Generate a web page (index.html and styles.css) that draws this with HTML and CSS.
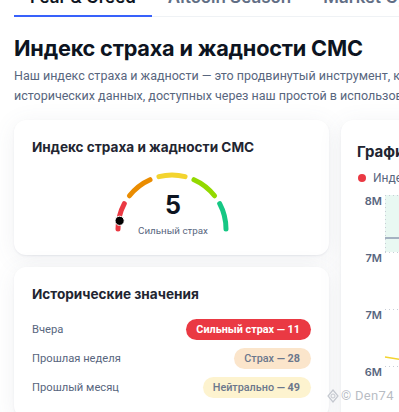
FILE: index.html
```html
<!DOCTYPE html>
<html lang="ru">
<head>
<meta charset="utf-8">
<title>Индекс страха и жадности CMC</title>
<link rel="stylesheet" href="styles.css">
</head>
<body>
<div class="page">
  <nav class="tabs">
    <a class="tab active">Fear &amp; Greed</a>
    <a class="tab">Altcoin Season</a>
    <a class="tab">Market Cycle Indicators</a>
  </nav>

  <h1 class="title">Индекс страха и жадности CMC</h1>
  <p class="intro"><span class="line">Наш индекс страха и жадности — это продвинутый инструмент, который помогает оценить настроения рынка на основе</span><br><span class="line">исторических данных, доступных через наш простой в использовании API.</span></p>

  <div class="grid">
    <div class="col">
      <section class="card gauge-card">
        <h2 class="card-title">Индекс страха и жадности CMC</h2>
        <svg class="gauge" width="120" height="70" viewBox="0 0 120 70">
          <g fill="none" stroke-width="5" stroke-linecap="round">
            <path d="M6 60 A54 54 0 0 1 12.32 34.65" stroke="#ea3943"/>
            <path d="M17.45 26.75 A54 54 0 0 1 38.04 10.67" stroke="#ea8c00"/>
            <path d="M46.94 7.6 A54 54 0 0 1 73.06 7.6" stroke="#f3d42f"/>
            <path d="M81.96 10.67 A54 54 0 0 1 102.55 26.75" stroke="#93d900"/>
            <path d="M107.68 34.65 A54 54 0 0 1 114 60" stroke="#16c784"/>
          </g>
          <circle cx="7.6" cy="51.8" r="4.6" fill="#000" stroke="#fff" stroke-width="1"/>
          <text class="g-value" x="61" y="45" text-anchor="middle">5</text>
          <text class="g-label" x="61" y="64.5" text-anchor="middle">Сильный страх</text>
        </svg>
      </section>

      <section class="card hist-card">
        <h2 class="card-title">Исторические значения</h2>
        <ul class="hist">
          <li class="row"><span class="row-label">Вчера</span><span class="pill pill-red">Сильный страх — 11</span></li>
          <li class="row"><span class="row-label">Прошлая неделя</span><span class="pill pill-orange">Страх <b>— 28</b></span></li>
          <li class="row"><span class="row-label">Прошлый месяц</span><span class="pill pill-yellow">Нейтрально <b>— 49</b></span></li>
        </ul>
      </section>
    </div>

    <section class="card chart-card">
      <h2 class="card-title chart-title">График индекса страха и жадности CMC</h2>
      <div class="legend"><span class="legend-dot"></span>Индекс страха и жадности CMC</div>
      <svg class="chart" width="600" height="200" viewBox="0 0 600 200">
        <rect x="28" y="6" width="572" height="57" fill="#e9f8f2"/>
        <g stroke="#c7cdd6" stroke-width="1" stroke-dasharray="1 3">
          <line x1="28" y1="6.5" x2="600" y2="6.5"/>
          <line x1="28" y1="63.5" x2="600" y2="63.5"/>
          <line x1="28" y1="120.5" x2="600" y2="120.5"/>
          <line x1="28" y1="177.5" x2="600" y2="177.5"/>
          <line x1="28.5" y1="6" x2="28.5" y2="63"/>
        </g>
        <line x1="28" y1="49" x2="600" y2="49" stroke="#8d9bb0" stroke-width="1.5"/>
        <polyline points="28,168 60,173 120,176" fill="none" stroke="#f3d42f" stroke-width="1.5"/>
        <g class="axis">
          <text x="25" y="16" text-anchor="end">8M</text>
          <text x="25" y="73" text-anchor="end">7M</text>
          <text x="25" y="130" text-anchor="end">7M</text>
          <text x="25" y="187" text-anchor="end">6M</text>
        </g>
      </svg>
    </section>
  </div>
</div>

<div class="watermark">
  <svg width="12" height="14" viewBox="0 0 12 14"><path d="M6 1 L11 7 L6 13 L1 7 Z" fill="none" stroke="#c4c8cf" stroke-width="1.2"/><circle cx="6" cy="7" r="2" fill="none" stroke="#c4c8cf" stroke-width="1"/></svg>
  <span>© Den74</span>
</div>
</body>
</html>
```

FILE: styles.css
```css
* { box-sizing: border-box; }

html, body {
  margin: 0;
  padding: 0;
  background: #ffffff;
  overflow: hidden;
}

body {
  font-family: Inter, "Noto Sans", "Liberation Sans", sans-serif;
  color: #0d1421;
  width: 399px;
  height: 412px;
  position: relative;
}

.page {
  width: 1000px;
  padding: 0 14px;
}

.tabs {
  display: flex;
  margin-top: -15px;
  border-bottom: 1px solid #eff2f5;
}

.tab {
  font-size: 17px;
  line-height: 24px;
  font-weight: 600;
  padding: 0 16px 6px;
  color: #616e85;
  border-bottom: 2px solid transparent;
  margin-bottom: -1px;
  white-space: nowrap;
}

.tab.active {
  color: #0d1421;
  border-bottom-color: #3861fb;
}

.title {
  margin: 17px 0 0;
  font-size: 21.7px;
  line-height: 28px;
  font-weight: 700;
  letter-spacing: -0.2px;
}

.intro {
  margin: 4px 0 0;
  font-family: Roboto, "Liberation Sans", sans-serif;
  font-size: 12.5px;
  line-height: 20px;
  color: #58667e;
}

.intro .line { white-space: nowrap; }

.grid {
  display: grid;
  grid-template-columns: 315px 1fr;
  gap: 12px;
  margin-top: 14px;
  align-items: start;
}

.col {
  display: flex;
  flex-direction: column;
  gap: 12px;
}

.card {
  background: #fff;
  border-radius: 12px;
  box-shadow: 0 1px 2px rgba(88, 102, 126, 0.10), 0 4px 24px rgba(88, 102, 126, 0.09);
}

.card-title {
  margin: 0;
  font-size: 13.6px;
  line-height: 20px;
  font-weight: 700;
  color: #222531;
}

.gauge-card {
  padding: 17px 18px 16px;
  display: flex;
  flex-direction: column;
  align-items: center;
}

.gauge-card .card-title { align-self: flex-start; }

.gauge {
  display: block;
  margin-top: 12px;
  overflow: visible;
}

.g-value {
  font-family: Inter, "Noto Sans", sans-serif;
  font-size: 25px;
  font-weight: 700;
  fill: #0d1421;
}

.g-label {
  font-family: Roboto, "Liberation Sans", sans-serif;
  font-size: 9.8px;
  fill: #58667e;
}

.hist-card {
  padding: 17px 18px 20px;
}

.hist {
  list-style: none;
  margin: 15px 0 0;
  padding: 0;
  display: flex;
  flex-direction: column;
  gap: 8px;
}

.row {
  display: flex;
  justify-content: space-between;
  align-items: center;
}

.row-label {
  font-family: Roboto, "Liberation Sans", sans-serif;
  font-size: 11.2px;
  color: #58667e;
}

.pill {
  height: 21px;
  line-height: 21px;
  padding: 0 11px 0 10px;
  border-radius: 11px;
  font-family: Roboto, "Liberation Sans", sans-serif;
  font-size: 10.8px;
  font-weight: 500;
  color: #6b778c;
  white-space: nowrap;
}

.pill b { font-weight: 700; }

.pill-red {
  background: #ea3943;
  color: #fff;
  font-weight: 700;
}

.pill-orange { background: #fbe5cb; }

.pill-yellow { background: #fdf3cf; }

.chart-card {
  padding: 22px 16px 20px;
  height: 400px;
}

.chart-title {
  font-size: 15px;
  white-space: nowrap;
}

.legend {
  margin-top: 8px;
  display: flex;
  align-items: center;
  gap: 7px;
  font-family: Roboto, "Liberation Sans", sans-serif;
  font-size: 12px;
  line-height: 16px;
  color: #58667e;
  white-space: nowrap;
  padding-left: 1px;
}

.legend-dot {
  width: 8px;
  height: 8px;
  border-radius: 50%;
  background: #ea3943;
}

.chart {
  display: block;
  margin-top: 3px;
}

.axis text {
  font-family: Inter, "Noto Sans", sans-serif;
  font-size: 11px;
  font-weight: 600;
  fill: #58667e;
}

.watermark {
  position: absolute;
  left: 327px;
  top: 388px;
  display: flex;
  align-items: center;
  gap: 2px;
  font-family: Roboto, "Liberation Sans", sans-serif;
  font-size: 13px;
  color: rgba(160, 166, 176, 0.75);
  letter-spacing: 0.3px;
  white-space: nowrap;
}
```
